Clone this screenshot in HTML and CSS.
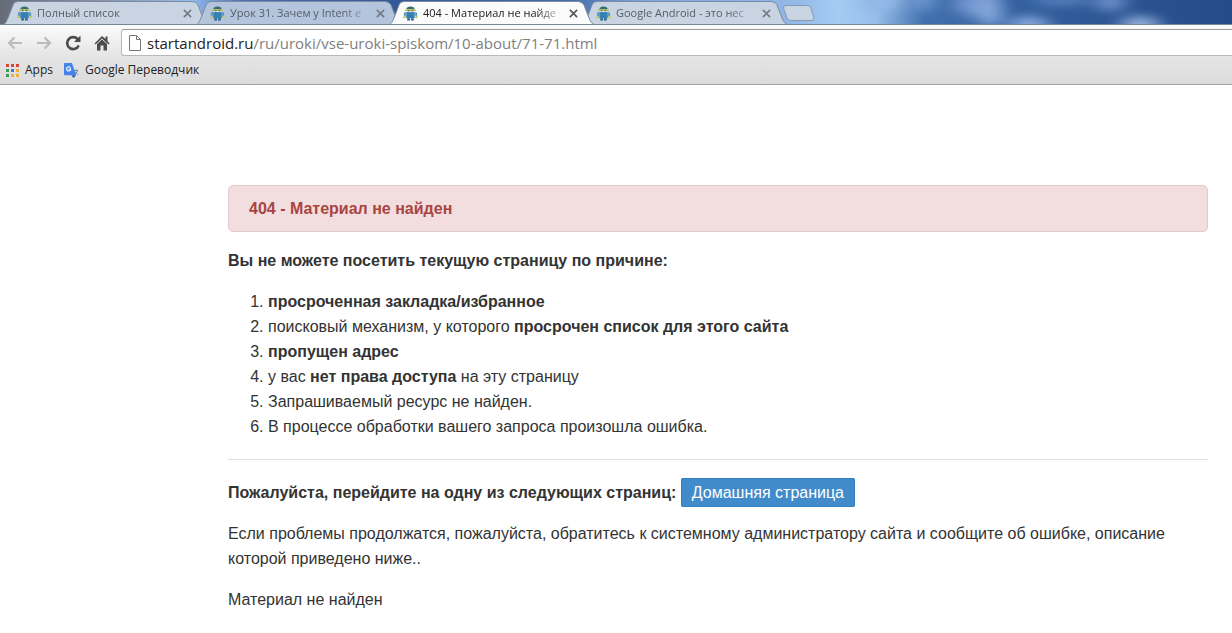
FILE: index.html
```html
<!DOCTYPE html>
<html lang="ru">
<head>
<meta charset="utf-8">
<title>404 - Материал не найден</title>
<link rel="stylesheet" href="styles.css">
</head>
<body>
<svg class="defs" width="0" height="0" aria-hidden="true">
  <defs>
    <linearGradient id="sky" x1="0" x2="1" y1="0" y2="0">
      <stop offset="0" stop-color="#666b78"/><stop offset=".08" stop-color="#8891a4"/>
      <stop offset=".155" stop-color="#93bdec"/><stop offset=".175" stop-color="#6d97d0"/>
      <stop offset=".2" stop-color="#4a6fae"/>
      <stop offset=".32" stop-color="#345997"/><stop offset=".46" stop-color="#426caa"/>
      <stop offset=".52" stop-color="#7fa6d8"/><stop offset=".64" stop-color="#90b7e6"/>
      <stop offset=".68" stop-color="#a6cbf2"/><stop offset=".71" stop-color="#98c0ec"/>
      <stop offset=".75" stop-color="#4270ae"/><stop offset=".82" stop-color="#34609f"/>
      <stop offset=".93" stop-color="#2a5290"/><stop offset="1" stop-color="#254c88"/>
    </linearGradient>
    <filter id="soft" x="-50%" y="-100%" width="200%" height="300%"><feGaussianBlur stdDeviation="9 5"/></filter>
    <symbol id="tab-shape" viewBox="0 0 208 25">
      <path d="M0 25C4 24 4 22 6 18L11 5Q12 1.500 16 1.500H190Q194 1.500 196 5L201 18Q203 24 208 25"/>
    </symbol>
    <symbol id="droid" viewBox="0 0 16 16">
      <path d="M3.500 3.500Q4 .5 8 .5t4.500 3z" fill="#2f6f6c"/>
      <path d="M2.500 3.500h11v2h-11z" fill="#b9b84a"/>
      <path d="M4 5h8v1.500H4z" fill="#e3edf2"/>
      <path d="M5 4.500h2v1H5zM9 4.500h2v1H9z" fill="#35544c"/>
      <path d="M3.500 6.500h9v6.500h-9z" fill="#3580b3"/>
      <path d="M1 7.500q1-1 2-1V11H1zM15 7.500q-1-1-2-1V11h2z" fill="#4e93c2"/>
      <path d="M.5 10.500h2.200V13H.5zM13.300 10.500h2.200V13h-2.200z" fill="#bfc560"/>
      <path d="M4.500 13h3v2.500h-3zM8.500 13h3v2.500h-3z" fill="#2c648c"/>
    </symbol>
    <symbol id="cross" viewBox="0 0 10 10">
      <path d="M1 1l8 8M9 1l-8 8" fill="none" stroke="currentColor" stroke-width="1.800"/>
    </symbol>
  </defs>
</svg>

<header class="browser">
  <div class="strip">
    <svg class="sky" viewBox="0 0 1232 25" preserveAspectRatio="none" aria-hidden="true">
      <path d="M0 0H1232V25H0z" fill="url(#sky)"/>
      <g filter="url(#soft)">
        <ellipse cx="880" cy="0" rx="20" ry="13" fill="#92b8e6"/>
        <ellipse cx="922" cy="0" rx="12" ry="12" fill="#6e98d0"/>
        <ellipse cx="978" cy="4" rx="24" ry="14" fill="#7296d0"/>
        <ellipse cx="990" cy="12" rx="12" ry="16" fill="#86a8dc"/>
        <ellipse cx="1029" cy="26" rx="20" ry="9" fill="#86a8dc"/>
        <ellipse cx="1062" cy="0" rx="30" ry="6" fill="#5480bd"/>
        <ellipse cx="1110" cy="2" rx="16" ry="10" fill="#688cc6"/>
        <ellipse cx="1140" cy="26" rx="20" ry="9" fill="#92aedc"/>
      </g>
    </svg>
    <nav class="tabs" aria-label="Вкладки">
      <div class="tab">
        <svg class="shape"><use href="#tab-shape"/></svg>
        <svg class="favicon"><use href="#droid"/></svg>
        <a class="title" href="#">Полный список</a>
        <button class="close" aria-label="Закрыть"><svg><use href="#cross"/></svg></button>
      </div>
      <div class="tab blue">
        <svg class="shape"><use href="#tab-shape"/></svg>
        <svg class="favicon"><use href="#droid"/></svg>
        <a class="title" href="#">Урок 31. Зачем у Intent е</a>
        <button class="close" aria-label="Закрыть"><svg><use href="#cross"/></svg></button>
      </div>
      <div class="tab active">
        <svg class="shape"><use href="#tab-shape"/></svg>
        <svg class="favicon"><use href="#droid"/></svg>
        <a class="title" href="#">404 - Материал не найде</a>
        <button class="close" aria-label="Закрыть"><svg><use href="#cross"/></svg></button>
      </div>
      <div class="tab">
        <svg class="shape"><use href="#tab-shape"/></svg>
        <svg class="favicon"><use href="#droid"/></svg>
        <a class="title" href="#">Google Android - это нес</a>
        <button class="close" aria-label="Закрыть"><svg><use href="#cross"/></svg></button>
      </div>
      <button class="new-tab" aria-label="Новая вкладка">
        <svg viewBox="0 0 32 16"><path d="M3 .5H25Q27 .5 28 3L31 13Q31 15.500 29 15.500H8Q5 15.500 4 13L.5 3Q.5 .5 3 .5z" fill="#c9d4e2" stroke="#8599b5"/></svg>
      </button>
    </nav>
  </div>

  <div class="toolbar">
    <div class="controls">
      <button class="tool" aria-label="Назад"><svg viewBox="0 0 16 16"><path d="M15 8H2M7.500 2.500L2 8l5.500 5.500" fill="none" stroke="#bbb" stroke-width="2.200"/></svg></button>
      <button class="tool" aria-label="Вперёд"><svg viewBox="0 0 16 16"><path d="M1 8h13M8.500 2.500L14 8l-5.500 5.500" fill="none" stroke="#bbb" stroke-width="2.200"/></svg></button>
      <button class="tool" aria-label="Обновить"><svg viewBox="0 0 16 16"><path d="M13 4.500A6 6 0 1 0 13.700 10.500" fill="none" stroke="#4c4c4c" stroke-width="2.600"/><path d="M15.500 .5V7H9z" fill="#4c4c4c"/></svg></button>
      <button class="tool" aria-label="Домой"><svg viewBox="0 0 16 16"><path d="M8 1L.5 8.500l1 1L8 3.500l6.500 6 1-1L13.500 6V1.500h-2V4z" fill="#4c4c4c"/><path d="M8 4.500L3 9v6.500h3.500V10.500h3v5H13V9z" fill="#4c4c4c"/></svg></button>
      <div class="address">
        <svg viewBox="0 0 12 16" aria-hidden="true"><path d="M.5 .5H7.500L11.500 4.500V15.500H.5zM7.500 .5V4.500H11.500" fill="#fff" stroke="#777"/></svg>
        <a class="url" href="#"><span class="host">startandroid.ru</span>/ru/uroki/vse-uroki-spiskom/10-about/71-71.html</a>
      </div>
    </div>
    <nav class="bookmarks" aria-label="Закладки">
      <a class="bookmark" href="#">
        <svg class="apps" viewBox="0 0 13 13" aria-hidden="true"><path d="M0 0h3v3H0zM5 0h3v3H5zM10 0h3v3h-3z" fill="#dc4437"/><path d="M0 5h3v3H0z" fill="#3a9b58"/><path d="M5 5h3v3H5z" fill="#4778d0"/><path d="M10 5h3v3h-3zM5 10h3v3H5zM10 10h3v3h-3z" fill="#eeb038"/><path d="M0 10h3v3H0z" fill="#3a9b58"/></svg>
        Apps
      </a>
      <a class="bookmark" href="#">
        <svg viewBox="0 0 16 16" aria-hidden="true"><path d="M6 4h8q1 0 1 1v9q0 1-1 1H8z" fill="#dce1e7"/><path d="M1 0h7.500L13 13H1q-1 0-1-1V1q0-1 1-1z" fill="#4584ea"/><path d="M8 13h5l-3 3z" fill="#2856b0"/><path d="M7 5A2.300 2.300 0 1 0 7 7.500V6.500H5" fill="none" stroke="#fff" stroke-width="1.200"/><path d="M10.500 8H15M13 7v1M14.500 8q-1 3-3 4M12 9.500l3 3" fill="none" stroke="#6c7f9c"/></svg>
        Google Переводчик
      </a>
    </nav>
  </div>
</header>

<main class="page">
  <h1 class="alert">404 - Материал не найден</h1>
  <p><strong>Вы не можете посетить текущую страницу по причине:</strong></p>
  <ol class="reasons">
    <li><strong>просроченная закладка/избранное</strong></li>
    <li>поисковый механизм, у которого <strong>просрочен список для этого сайта</strong></li>
    <li><strong>пропущен адрес</strong></li>
    <li>у вас <strong>нет права доступа</strong> на эту страницу</li>
    <li>Запрашиваемый ресурс не найден.</li>
    <li>В процессе обработки вашего запроса произошла ошибка.</li>
  </ol>
  <hr>
  <p><strong>Пожалуйста, перейдите на одну из следующих страниц:</strong> <a class="home" href="#">Домашняя страница</a></p>
  <p>Если проблемы продолжатся, пожалуйста, обратитесь к системному администратору сайта и сообщите об ошибке, описание которой приведено ниже..</p>
  <p>Материал не найден</p>
</main>
</body>
</html>
```

FILE: styles.css
```css
* { box-sizing: border-box; }

body {
  margin: 0;
  background: #fff;
  color: #333;
  font: 16px/25px "Liberation Sans", Arial, sans-serif;
}

button {
  padding: 0;
  border: 0;
  background: none;
}

svg { display: block; }
.defs { position: absolute; }

/* Browser window */
.browser {
  font-family: "Open Sans", "Noto Sans", sans-serif;
  font-size: 12px;
}

.strip {
  position: relative;
  height: 25px;
  overflow: hidden;
  border-bottom: 1px solid #77859b;
}

.sky {
  position: absolute;
  inset: 0;
  width: 100%;
  height: 100%;
}

.tabs {
  position: relative;
  display: flex;
  padding-left: 2px;
}

.tab {
  position: relative;
  display: flex;
  flex: none;
  align-items: center;
  width: 208px;
  height: 25px;
  margin-right: -15px;
  padding: 1px 18px 0 15px;
  color: #555c68;
}

.shape {
  position: absolute;
  inset: 0;
  width: 208px;
  height: 25px;
  fill: #c9d4e3;
  stroke: #7c8ba3;
}

.blue .shape { fill: #b4c4dc; }

.active {
  z-index: 1;
  color: #222;
}

.active .shape { fill: #fbfbfb; }

.favicon {
  position: relative;
  flex: none;
  width: 15px;
  height: 15px;
}

.title {
  position: relative;
  flex: 1;
  margin: 0 6px 0 5px;
  color: inherit;
  font-size: 11px;
  line-height: 18px;
  text-decoration: none;
  white-space: nowrap;
  mask-image: linear-gradient(90deg, #000 80%, transparent 102%);
}

.close {
  position: relative;
  color: #737b88;
}

.active .close { color: #555; }

.close svg {
  width: 9px;
  height: 9px;
}

.new-tab {
  margin: 5px 0 0 9px;
  height: 16px;
}

.new-tab svg {
  width: 32px;
  height: 16px;
}

.toolbar {
  background: linear-gradient(#fbfbfb, #e4e4e4 55%, #dcdcdc);
  border-bottom: 1px solid #a3a3a3;
}

.controls {
  display: flex;
  align-items: center;
  gap: 13px;
  padding: 4px 0 0 7px;
}

.tool svg {
  width: 16px;
  height: 16px;
}

.address {
  display: flex;
  flex: 1;
  align-items: center;
  gap: 6px;
  height: 27px;
  margin-left: -2px;
  padding-left: 7px;
  overflow: hidden;
  background: #fff;
  border: 1px solid #b8b8b8;
  border-top-color: #999;
  border-right: 0;
  border-radius: 3px 0 0 3px;
}

.address svg {
  flex: none;
  width: 12px;
  height: 16px;
}

.url {
  color: #808080;
  font-size: 15px;
  line-height: 24px;
  text-decoration: none;
  white-space: nowrap;
}

.host { color: #222; }

.bookmarks {
  display: flex;
  align-items: center;
  gap: 11px;
  height: 28px;
  padding-left: 6px;
}

.bookmark {
  display: flex;
  align-items: center;
  gap: 6px;
  color: #222;
  line-height: 18px;
  text-decoration: none;
}

.bookmark svg {
  width: 15px;
  height: 15px;
}

.bookmark .apps {
  width: 13px;
  height: 13px;
}

/* Error page */
.page { padding: 100px 24px 16px 228px; }

.alert {
  margin: 0 0 16px;
  padding: 10px 20px;
  background: #f2dede;
  border: 1px solid #e5c8cd;
  border-radius: 5px;
  color: #a94442;
  font-size: 16px;
  line-height: 25px;
}

p { margin: 0 0 16px; }

.reasons {
  margin: 0 0 20px;
  padding-left: 40px;
}

hr {
  margin: 0 0 20px;
  border: 0;
  border-top: 1px solid #ddd;
}

.home {
  padding: 5px 10px;
  background: #428bca;
  border: 1px solid #357ebd;
  border-radius: 2px;
  color: #fff;
  text-decoration: none;
}
```
